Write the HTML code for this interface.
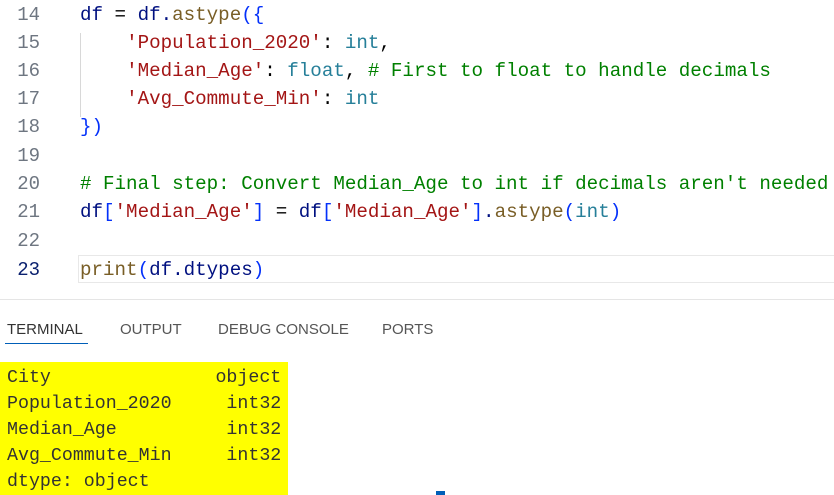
<!DOCTYPE html>
<html><head><style>
body{margin:0;width:834px;height:495px;background:#fff;overflow:hidden;position:relative;font-family:"Liberation Mono",monospace}
.ln{position:absolute;left:0;width:40px;text-align:right;font-size:19px;color:#6e7681;}
.cd{position:absolute;left:80px;font-size:19.2px;white-space:pre;color:#001080}
.s{color:#a31515}.t{color:#267f99}.c{color:#008000}.f{color:#795e26}.b{color:#0431fa}.k{color:#000}
.tab{position:absolute;top:320px;font-family:"Liberation Sans",sans-serif;font-size:15px;color:#555}
.term{position:absolute;left:7px;font-size:18.3px;white-space:pre;color:#333}
</style></head><body>
<div style="position:absolute;left:78px;top:255px;width:760px;height:28px;border:1px solid #e8e8e8;box-sizing:border-box"></div>
<div style="position:absolute;left:80px;top:33px;width:1px;height:84px;background:#d8d8d8"></div>
<div class="ln" style="top:4px">14</div><div class="cd" style="top:4px">df <span class="k">=</span> df.<span class="f">astype</span><span class="b">({</span></div>
<div class="ln" style="top:32px">15</div><div class="cd" style="top:32px">    <span class="s">'Population_2020'</span><span class="k">:</span> <span class="t">int</span><span class="k">,</span></div>
<div class="ln" style="top:60px">16</div><div class="cd" style="top:60px">    <span class="s">'Median_Age'</span><span class="k">:</span> <span class="t">float</span><span class="k">,</span> <span class="c"># First to float to handle decimals</span></div>
<div class="ln" style="top:88px">17</div><div class="cd" style="top:88px">    <span class="s">'Avg_Commute_Min'</span><span class="k">:</span> <span class="t">int</span></div>
<div class="ln" style="top:116px">18</div><div class="cd" style="top:116px"><span class="b">})</span></div>
<div class="ln" style="top:145px">19</div>
<div class="ln" style="top:173px">20</div><div class="cd" style="top:173px"><span class="c"># Final step: Convert Median_Age to int if decimals aren't needed</span></div>
<div class="ln" style="top:201px">21</div><div class="cd" style="top:201px">df<span class="b">[</span><span class="s">'Median_Age'</span><span class="b">]</span> <span class="k">=</span> df<span class="b">[</span><span class="s">'Median_Age'</span><span class="b">]</span>.<span class="f">astype</span><span class="b">(</span><span class="t">int</span><span class="b">)</span></div>
<div class="ln" style="top:230px">22</div>
<div class="ln" style="top:259px;color:#0b216f">23</div><div class="cd" style="top:259px"><span class="f">print</span><span class="b">(</span>df.dtypes<span class="b">)</span></div>
<div style="position:absolute;left:0;top:299px;width:834px;height:1px;background:#e5e5e5"></div>
<div class="tab" style="left:7px;color:#333;top:321px">TERMINAL</div>
<div style="position:absolute;left:5px;top:343px;width:83px;height:1px;background:#005fb8"></div>
<div class="tab" style="left:120px;top:321px">OUTPUT</div>
<div class="tab" style="left:218px;top:321px">DEBUG CONSOLE</div>
<div class="tab" style="left:382px;top:321px">PORTS</div>
<div style="position:absolute;left:0;top:362px;width:288px;height:133px;background:#ffff00"></div>
<div class="term" style="top:368px">City               object</div>
<div class="term" style="top:394px">Population_2020     int32</div>
<div class="term" style="top:420px">Median_Age          int32</div>
<div class="term" style="top:446px">Avg_Commute_Min     int32</div>
<div class="term" style="top:472px">dtype: object</div>
<div style="position:absolute;left:436px;top:491px;width:9px;height:4px;background:#005fb8"></div>
</body></html>
